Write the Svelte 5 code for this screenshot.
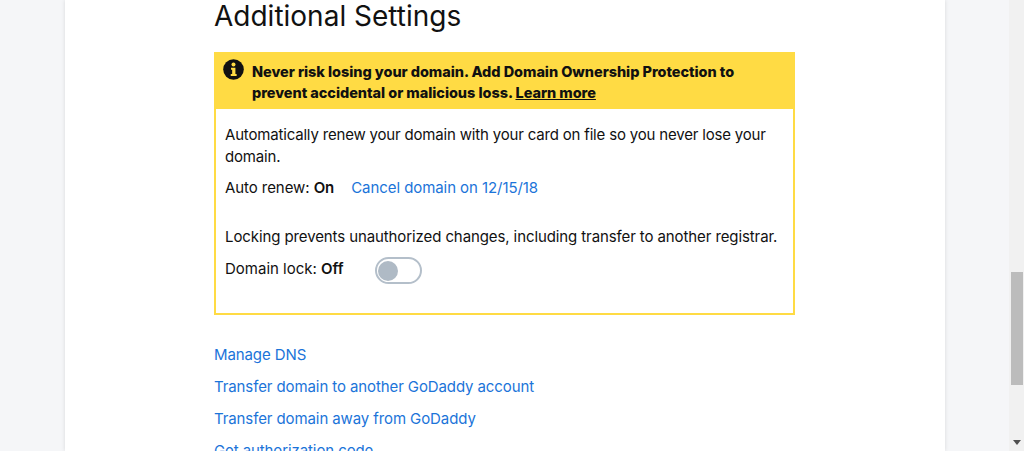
<script>
  const links = ['Manage DNS', 'Transfer domain to another GoDaddy account', 'Transfer domain away from GoDaddy', 'Get authorization code'];
</script>

<div class="page">
  <main class="card">
    <div class="content">
      <h2>Additional Settings</h2>
      <section class="panel">
        <div class="banner">
          <svg class="info" viewBox="0 0 22 22" width="21" height="21" aria-hidden="true">
            <circle cx="11" cy="11" r="10.8" fill="#111" />
            <circle cx="11" cy="5.8" r="2.1" fill="#ffdb44" />
            <path d="M8.4 9.2h4.6v6.6h1.3v2H8.1v-2h1.5v-4.6H8.4z" fill="#ffdb44" />
          </svg>
          <p>Never risk losing your domain. Add Domain Ownership Protection to prevent accidental or malicious loss. <a href="#learn">Learn more</a></p>
        </div>
        <div class="body">
          <p class="desc">Automatically renew your domain with your card on file so you never lose your domain.</p>
          <div class="row renew">
            <span>Auto renew: <b>On</b></span>
            <a class="link" href="#cancel">Cancel domain on 12/15/18</a>
          </div>
          <p class="lock">Locking prevents unauthorized changes, including transfer to another registrar.</p>
          <div class="row toggle-row">
            <span>Domain lock: <b>Off</b></span>
            <span class="toggle"><span class="knob"></span></span>
          </div>
        </div>
      </section>
      <nav class="links">
        {#each links as l}
          <a class="link" href="#x">{l}</a>
        {/each}
      </nav>
    </div>
  </main>
  <div class="scrollbar">
    <div class="thumb"></div>
    <svg class="arrow" viewBox="0 0 8 5" width="8" height="5" aria-hidden="true"><path d="M0 0h8L4 5z" fill="#505050" /></svg>
  </div>
</div>

<style>
  :global(body) {
    margin: 0;
    background: #f5f6f8;
    overflow: hidden;
  }
  .page {
    height: 451px;
    overflow: hidden;
    display: flex;
    font-family: Inter, "Liberation Sans", sans-serif;
    color: #111;
    font-size: 15px;
  }
  .card {
    margin-left: 65px;
    width: 880px;
    background: #fff;
    box-shadow: 0 0 4px rgba(0, 0, 0, 0.12);
    height: 451px;
    overflow: hidden;
    flex: none;
  }
  .scrollbar {
    margin-left: auto;
    width: 15px;
    background: #f1f1f1;
    height: 451px;
    position: relative;
  }
  .thumb {
    position: absolute;
    top: 272px;
    left: 2px;
    width: 12px;
    height: 113px;
    background: #bcbcbc;
  }
  .arrow {
    position: absolute;
    left: 4px;
    top: 440px;
  }
  .content {
    margin-left: 149px;
    width: 581px;
  }
  h2 {
    margin: 0;
    font-size: 28px;
    font-weight: 400;
    line-height: 32px;
    color: #111;
  }
  .panel {
    margin-top: 20px;
    border: 2px solid #ffdb44;
    height: 263px;
    box-sizing: border-box;
    width: 581px;
  }
  .banner {
    background: #ffdb44;
    display: flex;
    gap: 8px;
    padding: 7px 8px 0 7px;
    height: 55px;
    box-sizing: border-box;
    font-weight: 800;
    font-size: 14.5px;
    line-height: 21px;
    letter-spacing: -0.05px;
  }
  .banner p { margin: 0; }
  .banner a { color: #111; }
  .info { flex: none; margin-top: -2px; }
  .body {
    padding: 15px 9px;
  }
  .desc {
    margin: 0;
    line-height: 22px;
    letter-spacing: -0.18px;
  }
  .row {
    display: flex;
    align-items: flex-start;
  }
  .renew {
    margin-top: 9px;
    line-height: 22px;
    gap: 17px;
    letter-spacing: -0.07px;
  }
  b { font-weight: 600; }
  .lock {
    margin: 27px 0 0;
    line-height: 22px;
    letter-spacing: -0.1px;
    white-space: nowrap;
  }
  .toggle-row {
    margin-top: 10px;
    line-height: 22px;
    gap: 31px;
  }
  .toggle {
    width: 47px;
    height: 27px;
    margin-top: -1px;
    box-sizing: border-box;
    border: 2px solid #b4bfca;
    border-radius: 14px;
    display: flex;
    align-items: center;
    padding-left: 1px;
    background: #fff;
  }
  .knob {
    width: 20px;
    height: 20px;
    border-radius: 50%;
    background: #afbac5;
  }
  .link {
    color: #1b74d9;
    text-decoration: none;
  }
  .links {
    margin-top: 28px;
    display: flex;
    flex-direction: column;
    gap: 8px;
    line-height: 24px;
    align-items: flex-start;
    letter-spacing: -0.1px;
  }
</style>
